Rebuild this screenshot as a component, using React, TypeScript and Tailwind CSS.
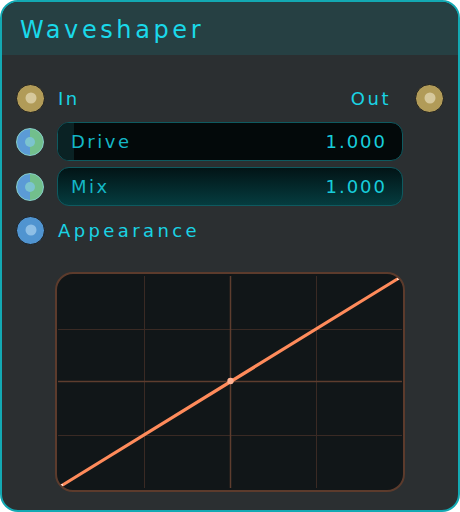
import React from 'react';

const font = { fontFamily: '"DejaVu Sans", "Liberation Sans", sans-serif' };

const Socket: React.FC<{ kind: 'gold' | 'split' | 'blue' }> = ({ kind }) => {
  if (kind === 'split') {
    return (
      <div className="relative w-[28px] h-[28px] shrink-0 rounded-full border-[1.5px] border-[#86cfc9] overflow-hidden bg-[linear-gradient(90deg,#5b9bd6_50%,#72bf8c_50%)]">
        <div className="absolute left-1/2 top-1/2 -translate-x-1/2 -translate-y-1/2 w-[10px] h-[10px] rounded-full bg-[#7cc4cf]" />
      </div>
    );
  }
  const fill = kind === 'gold' ? 'bg-[#b19b58]' : 'bg-[#5094d0]';
  const dot = kind === 'gold' ? 'bg-[#d6c89c]' : 'bg-[#8ebfe6]';
  return (
    <div className={`relative w-[29px] h-[29px] shrink-0 rounded-full border-[1.5px] border-[#1b1d1e] ${fill}`}>
      <div className={`absolute left-1/2 top-1/2 -translate-x-1/2 -translate-y-1/2 w-[11px] h-[11px] rounded-full ${dot}`} />
    </div>
  );
};

const Field: React.FC<{ label: string; value: string; hover?: boolean }> = ({ label, value, hover }) => (
  <div
    className={`relative flex-1 h-[39px] rounded-[12px] border border-[#0e5a60] overflow-hidden flex items-center justify-between pl-[13px] pr-[15px] ${
      hover ? 'bg-[linear-gradient(180deg,#021416,#053c3f)]' : 'bg-[#03090a]'
    }`}
  >
    {!hover && <div className="absolute left-0 top-0 bottom-0 w-[16px] bg-[#0a2224]" />}
    <span className="relative text-[18px] tracking-[2.5px] text-[#14b7c6]">{label}</span>
    <span className="relative text-[18px] tracking-[2px] text-[#17cddb]">{value}</span>
  </div>
);

const Curve: React.FC = () => (
  <div className="ml-[53px] mt-[28px] w-[350px] h-[220px] rounded-[18px] border-2 border-[#5c3b2c] bg-[#111618] overflow-hidden">
    <svg width="346" height="216" viewBox="0 0 346 216">
      {/* faint grid */}
      <g stroke="#3a2a24" strokeWidth="1">
        <line x1="87.5" y1="2" x2="87.5" y2="214" />
        <line x1="259.5" y1="2" x2="259.5" y2="214" />
        <line x1="1" y1="55.5" x2="345" y2="55.5" />
        <line x1="1" y1="161.5" x2="345" y2="161.5" />
      </g>
      {/* center axes */}
      <g stroke="#5e3d2e" strokeWidth="1.5">
        <line x1="173.5" y1="2" x2="173.5" y2="214" />
        <line x1="1" y1="107.5" x2="345" y2="107.5" />
      </g>
      <line x1="4" y1="212" x2="342" y2="4" stroke="#ff8b5b" strokeWidth="3.2" />
      <circle cx="173.5" cy="107" r="3.2" fill="#ffb293" />
      <rect x="1" y="210" width="5" height="5" fill="#ffd9c6" />
      <rect x="340" y="1" width="5" height="5" fill="#ffd9c6" />
    </svg>
  </div>
);

export default function App() {
  return (
    <div style={font} className="w-[460px] h-[512px] bg-[#2b2f31] rounded-[18px] border-2 border-[#13a9b3] overflow-hidden flex flex-col">
      <div className="h-[53px] shrink-0 bg-[#264043] flex items-center pl-[18px] pt-[2px]">
        <span className="text-[24px] tracking-[3.6px] text-[#1ad9ea]">Waveshaper</span>
      </div>

      <div className="flex flex-col pt-[29px]">
        <div className="h-[28px] flex items-center pl-[14px] pr-[14px]">
          <Socket kind="gold" />
          <span className="ml-[13px] text-[18px] tracking-[2.5px] text-[#1ad3e4]">In</span>
          <span className="ml-auto mr-[24px] text-[18px] tracking-[2.5px] text-[#1ad3e4]">Out</span>
          <Socket kind="gold" />
        </div>

        <div className="mt-[10px] flex items-center pl-[14px] pr-[55px] gap-[13px]">
          <Socket kind="split" />
          <Field label="Drive" value="1.000" />
        </div>

        <div className="mt-[6px] flex items-center pl-[14px] pr-[55px] gap-[13px]">
          <Socket kind="split" />
          <Field label="Mix" value="1.000" hover />
        </div>

        <div className="mt-[10px] h-[28px] flex items-center pl-[14px]">
          <Socket kind="blue" />
          <span className="ml-[13px] text-[18px] tracking-[3.4px] text-[#1ad3e4]">Appearance</span>
        </div>

        <Curve />
      </div>
    </div>
  );
}
